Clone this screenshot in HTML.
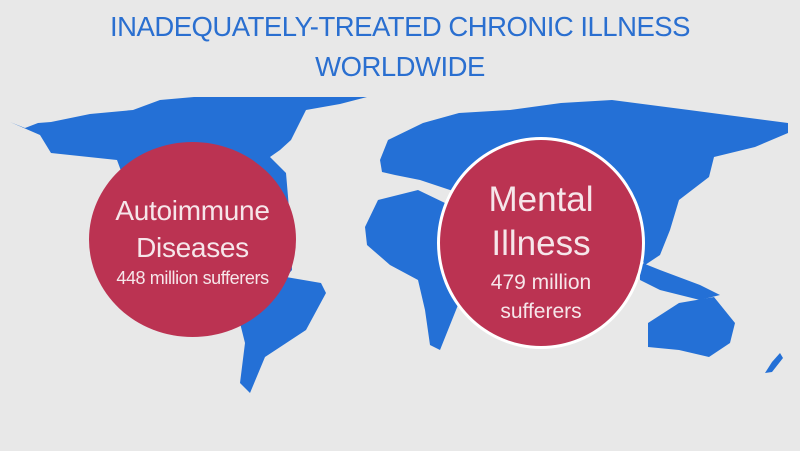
<!DOCTYPE html>
<html><head><meta charset="utf-8"><style>
html,body{margin:0;padding:0}
body{width:800px;height:451px;background:#e8e8e8;position:relative;overflow:hidden;font-family:"Liberation Sans",sans-serif}
.t{position:absolute;left:0;width:800px;text-align:center;color:#2a6fd0;font-size:27.5px;letter-spacing:-0.5px}
.c{position:absolute;border-radius:50%;background:#bb3352;color:#f6e6ea;text-align:center}
.l{position:absolute;left:0;right:0;text-align:center;white-space:nowrap}
</style></head><body>
<svg width="800" height="451" style="position:absolute;left:0;top:0">
<g fill="#2470d6">
<polygon points="10,122 25,128 38,123 51,122 90,114 133,110 160,100 194,97 250,97 367,97 340,104 306,110 291,140 280,150 270,157 286,173 290,220 292,270 286,277 250,280 200,290 150,250 117,160 51,153 40,135"/>
<polygon points="286,277 321,283 326,293 306,330 265,357 250,393 240,383 245,343 240,323 255,300"/>
<polygon points="380,160 388,140 423,123 459,113 510,110 561,103 612,100 689,110 788,123 788,133 755,147 714,157 709,177 679,200 670,230 660,255 645,265 630,240 600,230 560,210 500,200 450,190 420,180 395,175 382,172"/>
<polygon points="365,227 378,200 418,190 445,203 470,230 460,300 440,350 430,345 425,310 418,280 390,265 367,245"/>
<polygon points="648,323 679,303 714,297 735,323 730,343 709,357 679,350 648,347"/>
<polygon points="640,262 660,270 700,285 720,295 700,300 660,290 640,280"/>
<polygon points="765,373 772,362 780,353 783,358 772,372"/>
</g></svg>
<div class="t" style="top:11px">INADEQUATELY-TREATED CHRONIC ILLNESS</div>
<div class="t" style="top:51px">WORLDWIDE</div>
<div class="c" style="left:89px;top:142px;width:207px;height:195px">
<div class="l" style="top:53px;font-size:28px;letter-spacing:-0.3px">Autoimmune</div>
<div class="l" style="top:90px;font-size:28px;letter-spacing:-0.3px">Diseases</div>
<div class="l" style="top:126px;font-size:18px;letter-spacing:-0.4px">448 million sufferers</div>
</div>
<div class="c" style="left:437px;top:137px;width:202px;height:206px;border:3px solid #fff">
<div class="l" style="top:40px;font-size:35px">Mental</div>
<div class="l" style="top:84px;font-size:35px">Illness</div>
<div class="l" style="top:131px;font-size:21px">479 million</div>
<div class="l" style="top:160px;font-size:21px">sufferers</div>
</div>
</body></html>
